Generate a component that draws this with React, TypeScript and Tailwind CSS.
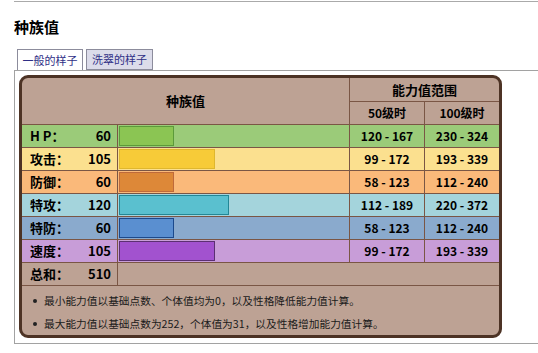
const stats = [
  { label: 'H P：', value: 60, lv50: '120 - 167', lv100: '230 - 324', row: 'bg-[#9bcb79]', bar: 'bg-[#8bc553] border-[#5c9a3a]' },
  { label: '攻击：', value: 105, lv50: '99 - 172', lv100: '193 - 339', row: 'bg-[#fbe08f]', bar: 'bg-[#f7cb38] border-[#dfb72e]' },
  { label: '防御：', value: 60, lv50: '58 - 123', lv100: '112 - 240', row: 'bg-[#fab97a]', bar: 'bg-[#dd8838] border-[#bf6a3a]' },
  { label: '特攻：', value: 120, lv50: '112 - 189', lv100: '220 - 372', row: 'bg-[#a4d4dc]', bar: 'bg-[#5ac0cf] border-[#238796]' },
  { label: '特防：', value: 60, lv50: '58 - 123', lv100: '112 - 240', row: 'bg-[#8aaacd]', bar: 'bg-[#5a8fd0] border-[#1c4a8c]' },
  { label: '速度：', value: 105, lv50: '99 - 172', lv100: '193 - 339', row: 'bg-[#c89dd8]', bar: 'bg-[#a252cf] border-[#5b2f72]' },
];

const notes = [
  '最小能力值以基础点数、个体值均为0，以及性格降低能力值计算。',
  '最大能力值以基础点数为252，个体值为31，以及性格增加能力值计算。',
];

export default function App() {
  return (
    <div className="w-[538px] h-[353px] overflow-hidden bg-white text-black font-['Noto_Sans_CJK_SC',sans-serif]">
      {/* top rule */}
      <div className="pt-px pl-[14px]">
        <div className="h-px bg-[#aaaaaa]" />
      </div>

      <h2 className="pl-[14px] mt-[15px] text-[15px] font-bold leading-[20px]">种族值</h2>

      {/* tabs */}
      <div className="flex items-end gap-[3px] pl-[17px] mt-[12px] text-[11px] text-[#2f2f86]">
        <div className="w-[66px] h-[21px] flex items-center justify-center bg-white border border-b-0 border-[#8c8c9c]">
          一般的样子
        </div>
        <div className="w-[67px] h-[21px] flex items-center justify-center bg-[#dcdcea] border border-[#8c8c9c]">
          洗翠的样子
        </div>
      </div>

      {/* tab panel */}
      <div className="ml-[14px] border-l border-t border-b border-[#a2a2a2] pt-[4px] pl-[4px] pb-[5px]">
        <div className="w-[483px] rounded-[9px] border-[3px] border-[#4d3325] bg-[#bda294] overflow-hidden">
          {/* header */}
          <div className="flex border-b border-[#7a5645]">
            <div className="w-[328px] border-r border-[#7a5645] flex items-center justify-center text-[13px] font-bold">
              种族值
            </div>
            <div className="flex-1 flex flex-col">
              <div className="h-[24px] border-b border-[#7a5645] flex items-center justify-center text-[13px] font-bold">
                能力值范围
              </div>
              <div className="h-[22px] flex text-[12px] font-bold">
                <div className="w-[75px] border-r border-[#7a5645] flex items-center justify-center">50级时</div>
                <div className="flex-1 flex items-center justify-center">100级时</div>
              </div>
            </div>
          </div>

          {/* stat rows */}
          {stats.map((s) => (
            <div key={s.label} className={`flex h-[23px] border-b border-[#7a5645] ${s.row}`}>
              <div className="w-[96px] border-r border-[#7a5645] flex items-center justify-between pl-[8px] pr-[6px] text-[13px] font-bold">
                <span>{s.label}</span>
                <span>{s.value}</span>
              </div>
              <div className="w-[232px] border-r border-[#7a5645] pl-px pt-px">
                <div className={`h-[20px] border ${s.bar}`} style={{ width: Math.round(s.value * 0.917) }} />
              </div>
              <div className="w-[75px] border-r border-[#7a5645] flex items-center justify-center text-[12px] font-bold">
                {s.lv50}
              </div>
              <div className="flex-1 flex items-center justify-center text-[12px] font-bold">{s.lv100}</div>
            </div>
          ))}

          {/* total */}
          <div className="flex h-[23px] border-b border-[#7a5645]">
            <div className="w-[96px] border-r border-[#7a5645] flex items-center justify-between pl-[8px] pr-[6px] text-[13px] font-bold">
              <span>总和：</span>
              <span>510</span>
            </div>
            <div className="flex-1" />
          </div>

          {/* notes */}
          <ul className="pt-[3px] pl-[11px] text-[10.7px] leading-[23px] text-[#1a1a1a]">
            {notes.map((n) => (
              <li key={n} className="flex items-center">
                <span className="w-[4px] h-[4px] rounded-full bg-[#222] mr-[7px]" />
                <span>{n}</span>
              </li>
            ))}
          </ul>
        </div>
      </div>
    </div>
  );
}
